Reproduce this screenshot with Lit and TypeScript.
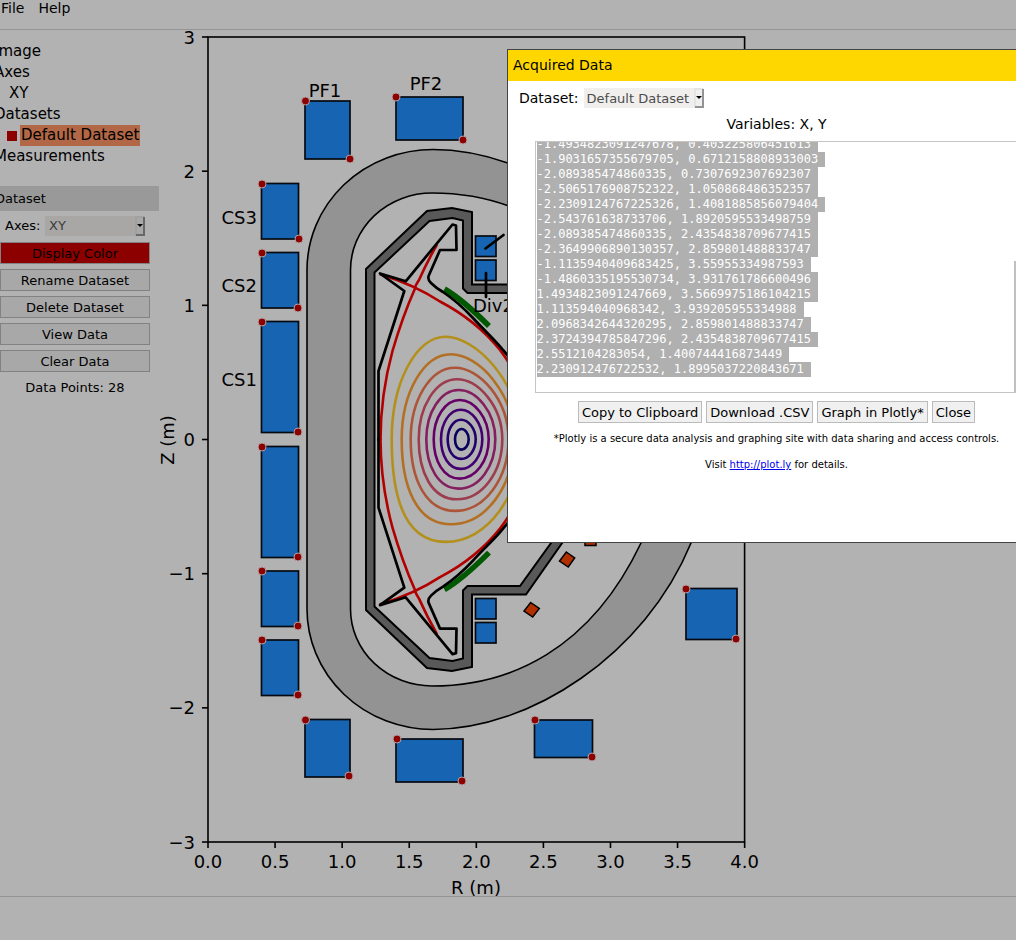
import { LitElement, html, svg, css } from "lit";
import { customElement, query } from "lit/decorators.js";

const SANS = css`"DejaVu Sans", sans-serif`;

const POINTS = [
  "-3.6201117318435754, 0.40322580645161",
  "-3.2849162011173183, 0.671215880893300",
  "-3.9553072625698324, 2.07692307692307",
  "-3.7039106145251397, 2.43548387096774",
  "2.089385474860335, 0.7307692307692307",
  "2.50651769087523, 1.0508684863523570",
  "2.55121042830540, 1.4007444168734490",
  "2.23091247672253, 1.0508684863523570",
  "1.49348230912476, 0.6712158808933003",
  "1.90316573556797, 0.4032258064516130",
  "-1.11359404096834, 0.67121588089330",
  "-1.48603351955307, 0.40322580645161",
  "-1.4934823091247678, 0.403225806451613",
  "-1.9031657355679705, 0.6712158808933003",
  "-2.089385474860335, 0.7307692307692307",
  "-2.5065176908752322, 1.050868486352357",
  "-2.2309124767225326, 1.4081885856079404",
  "-2.543761638733706, 1.8920595533498759",
  "-2.089385474860335, 2.4354838709677415",
  "-2.3649906890130357, 2.859801488833747",
  "-1.1135940409683425, 3.55955334987593",
  "-1.4860335195530734, 3.931761786600496",
  "1.4934823091247669, 3.5669975186104215",
  "1.113594040968342, 3.939205955334988",
  "2.0968342644320295, 2.859801488833747",
  "2.3724394785847296, 2.4354838709677415",
  "2.5512104283054, 1.400744416873449",
  "2.230912476722532, 1.8995037220843671",
];

/* x, y, width, height of each coil */
const COILS = [
  [305, 101, 45, 58], [396, 97, 67, 43],
  [261.5, 183.5, 37, 55.5], [261.5, 252.5, 37, 55.5], [261.5, 321.5, 37, 111],
  [261.5, 446.5, 37, 111], [261.5, 571, 37, 55.5], [261.5, 640, 37, 55.5],
  [305, 719.5, 45, 57.5], [396, 739, 67, 43], [534.5, 720, 58, 37.5], [686, 588.5, 51, 51],
  [475.5, 236, 20.5, 20.5], [475.5, 260, 20.5, 20.5],
  [475.5, 598.5, 20.5, 20.5], [475.5, 622.5, 20.5, 20.5],
];

const MARKS = [
  [305.5, 101], [350, 159], [396, 97], [463, 140], [262, 184], [299, 239],
  [262, 253], [298, 308], [262, 322], [298, 432], [262, 447], [298, 557],
  [262, 571], [298, 626], [262, 640], [298, 695], [305.5, 720], [349, 776],
  [397, 739], [462, 781], [535, 720], [592, 757], [686, 589], [736, 639],
];

/* left, right, top, apex x, colour of each flux surface */
const FLUX: [number, number, number, number, string][] = [
  [391.7, 521, 336.7, 445.7, "#b38f1c"],
  [401.7, 514, 354.3, 451, "#b37024"],
  [410.7, 508.5, 367.7, 455, "#ac5539"],
  [418.7, 502.3, 379.3, 457, "#9c3c4e"],
  [426.3, 495.3, 390, 458.7, "#84205f"],
  [433.7, 488.7, 400, 459.7, "#660066"],
  [441, 482.3, 409.7, 460.7, "#420070"],
  [447.7, 475.7, 419.7, 461, "#23006a"],
  [455, 468.7, 429, 461.5, "#08005c"],
];

const MID = 439.3;

function fluxPath(l: number, r: number, t: number, ax: number) {
  const h = MID - t, k = 0.552, b = MID + h;
  return `M${l} ${MID}C${l} ${MID - h * k} ${ax - (ax - l) * k} ${t} ${ax} ${t}` +
    `S${r} ${MID - h * k} ${r} ${MID}S${ax + (r - ax) * k} ${b} ${ax} ${b}S${l} ${MID + h * k} ${l} ${MID}Z`;
}

@customElement("reactor-plot")
export class ReactorPlot extends LitElement {
  static styles = css`
    :host { display: block; }
    .plot { display: block; width: 600px; height: 866px; }
    .label { font: 18px ${SANS}; fill: #000; }
    .mid { text-anchor: middle; }
    .end { text-anchor: end; }
    .line { fill: none; stroke: #000; stroke-width: 1.6; }
    .coil { fill: #1765b2; stroke: #060a10; stroke-width: 1.7; }
    .ring { fill: #939393; stroke: #000; stroke-width: 1.6; }
    .cavity { fill: #b2b2b2; stroke: #000; stroke-width: 1.6; }
    .vessel { fill: #595959; fill-rule: evenodd; stroke: #000; stroke-width: 2; }
    .wall { fill: none; stroke: #000; stroke-width: 2.7; stroke-linejoin: round; stroke-linecap: round; }
    .separatrix { fill: none; stroke: #b20000; stroke-width: 2.6; }
    .plate { fill: none; stroke: #005900; stroke-width: 5.5; }
    .flux { fill: none; stroke-width: 2.6; }
    .probe { fill: #b22f00; stroke: #000; stroke-width: 1.5; }
    .mark { fill: #8c0000; stroke: #b2a0a0; stroke-width: 1; }
  `;

  private half() {
    return svg`
      <path class="plate" d="M444.5 289C460 298 476 313 489 326"></path>
      <path class="separatrix" d="M379.5 274C402 281 424 291 440 301.5C462 313 484 330 500 350Q510 363 518 380"></path>
      <path class="separatrix" d="M437 244.500Q427 262 419 280Q415 286 415 288.500Q402 318 392.500 351Q380.500 395 380.500 440"></path>
      <path class="wall" d="M520 374Q512 360 503 350C496 341 484 330 473 318Q458 302 443 292Q436 288 431 283Q427 279 429 275L440 250H456.500L456 225.500L452.500 224.500L405.700 281.300L380 273.500L404.300 291L378.500 371V440"></path>
    `;
  }

  render() {
    return html`
      <svg class="plot" viewBox="160 30 600 866" role="img" aria-label="R (m) against Z (m)">
        <rect class="line" x="208" y="37" width="536.600" height="805"></rect>
        ${[3, 2, 1, 0, -1, -2, -3].map((v, i) => {
          const y = 37 + i * 134.17;
          return svg`<path class="line" d="M202 ${y}H208"></path>
            <text class="label end" x="195" y=${y + 6.5}>${v < 0 ? "−" + -v : v}</text>`;
        })}
        ${[0, 1, 2, 3, 4, 5, 6, 7, 8].map((i) => {
          const x = 208 + i * 67.08;
          return svg`<path class="line" d="M${x} 842V848"></path>
            <text class="label mid" x=${x} y="868">${(i / 2).toFixed(1)}</text>`;
        })}
        <text class="label mid" x="476" y="894">R (m)</text>
        <text class="label mid" transform="translate(174 440) rotate(-90)">Z (m)</text>

        <path class="ring" d="M307 270A126 120.500 0 0 1 433 149.500C530 149.500 645 224 691 336Q712 439 691 543C645 655 530 729.500 433 729.500A126 120.500 0 0 1 307 609Z"></path>
        <path class="cavity" d="M350.500 270A81.500 77 0 0 1 432 193C510 193 590 229 641 336Q662 439 641 543C590 650 510 686 432 686A81.500 77 0 0 1 350.500 609Z"></path>
        <path class="vessel" d="M366 269L427 211L452 208L472 212V284.500H526L600 390V489L526 594.500H472V667L452 671L427 668L366 610ZM374.500 272.500L429.500 221L452.500 218L463 220.500V288.500L467.500 293H520L590 390V489L520 586H467.500L463 590.500V658.500L452.500 661L429.500 658L374.500 606.500Z"></path>

        ${FLUX.map(([l, r, t, ax, c]) => svg`<path class="flux" stroke=${c} d=${fluxPath(l, r, t, ax)}></path>`)}
        <g>${this.half()}</g>
        <g transform="matrix(1 0 0 -1 0 878.600)">${this.half()}</g>

        ${COILS.map(([x, y, w, h]) => svg`<rect class="coil" x=${x} y=${y} width=${w} height=${h}></rect>`)}
        <path class="wall" d="M485.500 248.500L503.500 235M486 273V297"></path>
        <path class="probe" d="M566.300 552L574.700 558L568.300 567L559.500 561ZM530.700 602.500L539.300 608.500L532.700 617L524 611ZM585 535H596V545.500H585Z"></path>

        <text class="label mid" x="325" y="97">PF1</text>
        <text class="label mid" x="426" y="90">PF2</text>
        <text class="label end" x="257" y="224">CS3</text>
        <text class="label end" x="257" y="292">CS2</text>
        <text class="label end" x="257" y="386">CS1</text>
        <text class="label" x="473" y="312">Div2</text>

        ${MARKS.map(([x, y]) => svg`<circle class="mark" cx=${x} cy=${y} r="4"></circle>`)}
      </svg>
    `;
  }
}

@customElement("data-dialog")
export class DataDialog extends LitElement {
  static styles = css`
    :host { display: block; background: #fff; border: 1px solid #444; box-sizing: border-box; font: 14px/16px ${SANS}; color: #000; }
    .title { margin: 0; padding: 0 5px; font: inherit; line-height: 31px; background: #ffd700; }
    .row { display: flex; align-items: center; gap: 5px; padding: 7px 11px 0; }
    .pick {
      appearance: none; height: 20px; width: 120px; margin: 0; padding: 0 14px 0 3px; border: 0; border-radius: 0;
      font: 13px ${SANS}; color: #4c4c4c;
      background: #f0efed url("data:image/svg+xml,%3Csvg xmlns='http://www.w3.org/2000/svg' width='10' height='20'%3E%3Cpath fill='%23e4e4e4' d='M0 0h9v20H0z'/%3E%3Cpath fill='%23949494' d='M8 1h2v19H1v-2h7z'/%3E%3Cpath fill='%23f0f0f0' d='M2 2h6v16H2z'/%3E%3Cpath d='M2 8h6L5 11z'/%3E%3C/svg%3E") right top no-repeat;
    }
    .vars { margin: 7px 0 0; line-height: 18px; text-align: center; }
    .data {
      display: block; box-sizing: border-box; width: 484px; height: 252px; margin: 8px auto 0; padding: 0 1px;
      border: 1px solid #c8c4c2; border-radius: 0; outline: 0; resize: none; overflow-x: hidden; overflow-y: scroll;
      font: 12px/15px "DejaVu Sans Mono", monospace; color: #000; white-space: pre;
      background: #fff linear-gradient(#c0c0c0, #c0c0c0) right bottom / 4px 131px no-repeat;
    }
    .data::selection { background: #b0b0b0; color: #fff; }
    .actions { display: flex; justify-content: center; gap: 4px; margin-top: 8px; }
    .action { height: 22px; padding: 0 3px; border: 1px solid #bbb; border-radius: 0; background: #f0f0f0; font: 13px ${SANS}; color: #000; }
    .note { margin: 10px 0 0; font-size: 10px; line-height: 12px; text-align: center; }
    .note + .note { margin-top: 14px; padding-bottom: 71px; }
    .link { color: #00e; }
  `;

  @query(".data") private data!: HTMLTextAreaElement;

  firstUpdated() {
    this.data.focus();
    this.data.select();
    this.data.scrollTop = this.data.scrollHeight;
  }

  render() {
    return html`
      <h2 class="title">Acquired Data</h2>
      <div class="row">
        <label for="set">Dataset:</label>
        <select id="set" class="pick"><option>Default Dataset</option></select>
      </div>
      <p class="vars"><label for="data">Variables: X, Y</label></p>
      <textarea id="data" class="data" spellcheck="false" .value=${POINTS.join("\n") + "\n"}></textarea>
      <div class="actions">
        <button class="action">Copy to Clipboard</button>
        <button class="action">Download .CSV</button>
        <button class="action">Graph in Plotly*</button>
        <button class="action">Close</button>
      </div>
      <p class="note">*Plotly is a secure data analysis and graphing site with data sharing and access controls.</p>
      <p class="note">Visit <a class="link" href="http://plot.ly">http://plot.ly</a> for details.</p>
    `;
  }
}

@customElement("app-root")
export class AppRoot extends LitElement {
  static styles = css`
    :host {
      display: flex; flex-direction: column; position: relative; min-height: 100vh; overflow: hidden;
      background: #b2b2b2; color: #000; font: 14px/21px ${SANS};
    }
    .menu { display: flex; gap: 14px; height: 30px; box-sizing: border-box; padding: 0 1px; border-bottom: 1px solid #959595; line-height: 16px; }
    .item { padding: 0; border: 0; background: none; font: inherit; color: inherit; height: 16px; }
    .body { display: flex; flex: 1; }
    .side { flex: none; width: 165px; margin-left: -5px; padding-top: 11px; box-sizing: border-box; }
    .tree, .branch { margin: 0; padding: 0; list-style: none; }
    .tree { font-size: 15px; margin-left: -1px; }
    .branch { padding-left: 15px; }
    .set { display: flex; align-items: center; margin-left: -2px; }
    .set::before { content: ""; width: 10px; height: 10px; margin-right: 3px; background: #8c0000; }
    .current { padding: 0 1px; background: #b26846; }
    .heading { margin: 19px 1px 0 0; font: 13px/25px ${SANS}; background: #999; }
    .tools { display: grid; gap: 5px; width: 150px; margin: 3px 0 0 5px; font-size: 13px; }
    .row { display: flex; align-items: center; justify-content: space-between; padding: 0 5px; height: 23px; }
    .pick {
      appearance: none; width: 100px; height: 20px; margin: 0; padding: 0 4px; border: 0; border-radius: 0;
      font: 13px ${SANS}; color: #3c3c3c;
      background: #a8a7a6 url("data:image/svg+xml,%3Csvg xmlns='http://www.w3.org/2000/svg' width='10' height='20'%3E%3Cpath fill='%23a0a0a0' d='M0 0h9v20H0z'/%3E%3Cpath fill='%23686868' d='M8 1h2v19H1v-2h7z'/%3E%3Cpath fill='%23a8a8a8' d='M2 2h6v16H2z'/%3E%3Cpath d='M2 8h6L5 11z'/%3E%3C/svg%3E") right top no-repeat;
    }
    .tool { height: 22px; padding: 0; border: 1px solid #828282; border-radius: 0; background: #a8a8a8; font: 13px ${SANS}; color: #000; }
    .color { background: #8c0000; }
    .count { margin: 0; line-height: 22px; text-align: center; }
    .status { height: 43px; border-top: 1px solid #959595; }
    .dialog { position: absolute; top: 49px; right: -30px; width: 539px; }
  `;

  render() {
    return html`
      <nav class="menu">
        <button class="item">File</button>
        <button class="item">Help</button>
      </nav>
      <div class="body">
        <aside class="side">
          <ul class="tree">
            <li>Image</li>
            <li>Axes<ul class="branch"><li>XY</li></ul></li>
            <li>Datasets<ul class="branch"><li class="set"><span class="current">Default Dataset</span></li></ul></li>
            <li>Measurements</li>
          </ul>
          <h2 class="heading">Dataset</h2>
          <div class="tools">
            <div class="row">
              <label for="axes">Axes:</label>
              <select id="axes" class="pick"><option>XY</option></select>
            </div>
            <button class="tool color">Display Color</button>
            <button class="tool">Rename Dataset</button>
            <button class="tool">Delete Dataset</button>
            <button class="tool">View Data</button>
            <button class="tool">Clear Data</button>
            <p class="count">Data Points: 28</p>
          </div>
        </aside>
        <reactor-plot></reactor-plot>
      </div>
      <footer class="status"></footer>
      <data-dialog class="dialog"></data-dialog>
    `;
  }
}
